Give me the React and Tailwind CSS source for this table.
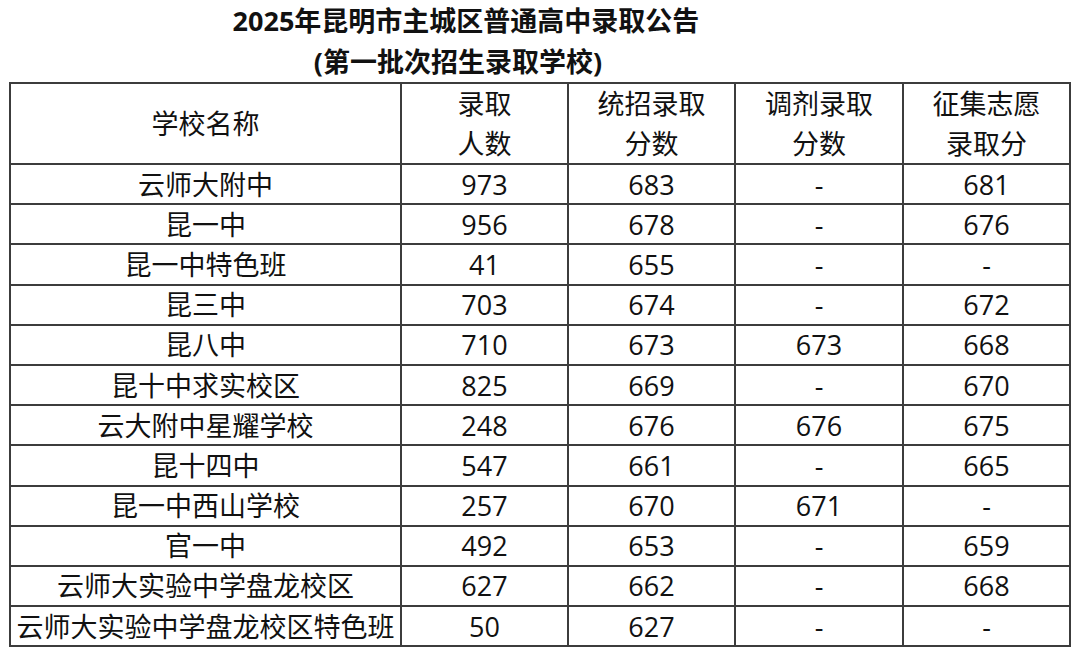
import React from "react";

const rows = [
  ["云师大附中", "973", "683", "-", "681"],
  ["昆一中", "956", "678", "-", "676"],
  ["昆一中特色班", "41", "655", "-", "-"],
  ["昆三中", "703", "674", "-", "672"],
  ["昆八中", "710", "673", "673", "668"],
  ["昆十中求实校区", "825", "669", "-", "670"],
  ["云大附中星耀学校", "248", "676", "676", "675"],
  ["昆十四中", "547", "661", "-", "665"],
  ["昆一中西山学校", "257", "670", "671", "-"],
  ["官一中", "492", "653", "-", "659"],
  ["云师大实验中学盘龙校区", "627", "662", "-", "668"],
  ["云师大实验中学盘龙校区特色班", "50", "627", "-", "-"],
];

const headers = [
  ["学校名称"],
  ["录取", "人数"],
  ["统招录取", "分数"],
  ["调剂录取", "分数"],
  ["征集志愿", "录取分"],
];

export default function App() {
  return (
    <div
      className="w-[1080px] h-[656px] bg-white text-black overflow-hidden"
      style={{ fontFamily: '"Open Sans","Noto Sans CJK SC",sans-serif' }}
    >
      <div className="w-[932px] pt-0 text-center font-bold text-[27px] leading-[41px] text-[#111]">
        <div>2025年昆明市主城区普通高中录取公告</div>
        <div className="pr-[16px]">(第一批次招生录取学校)</div>
      </div>
      <div className="ml-[9px] w-[1062px] bg-[#3c3c3c] p-[2px] grid grid-cols-[389px_165px_165px_166px_165px] grid-rows-[79px_repeat(12,38.2px)] gap-[2px] text-[27px] text-[#111]">
        {headers.map((h, i) => (
          <div
            key={i}
            className="bg-white flex flex-col items-center justify-center leading-[40px]"
          >
            {h.map((t, j) => (
              <div key={j}>{t}</div>
            ))}
          </div>
        ))}
        {rows.map((r, ri) =>
          r.map((c, ci) => (
            <div
              key={ri + "-" + ci}
              className="bg-white flex items-center justify-center leading-none whitespace-nowrap"
            >
              {c}
            </div>
          ))
        )}
      </div>
    </div>
  );
}
